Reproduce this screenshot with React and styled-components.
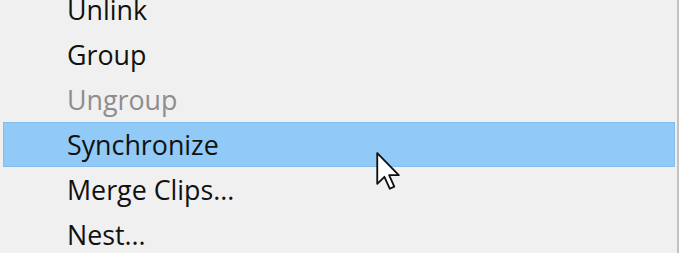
import React from "react";
import styled, { createGlobalStyle } from "styled-components";

const Global = createGlobalStyle`
  html, body {
    margin: 0;
    padding: 0;
    background: #f0f0f0;
    overflow: hidden;
  }
`;

const Page = styled.div`
  width: 680px;
  height: 253px;
  overflow: hidden;
  display: flex;
  background: #fff;
`;

const Menu = styled.ul`
  position: relative;
  list-style: none;
  margin: -13px 0 0 0;
  padding: 0 0 0 3px;
  width: 674px;
  background: #f0f0f0;
  border-right: 2px solid #c2c2c2;
  font-family: "Open Sans", "Noto Sans", sans-serif;
  font-size: 26.8px;
`;

const Item = styled.li`
  box-sizing: border-box;
  height: 45px;
  display: flex;
  align-items: center;
  padding-left: 63px;
  color: ${(p) => (p.disabled ? "#8d8d8d" : "#111")};
  background: ${(p) => (p.active ? "#91c9f7" : "transparent")};
  border: 1px solid ${(p) => (p.active ? "#84bcec" : "transparent")};
  margin-right: 2px;
`;

const Cursor = styled.svg`
  position: absolute;
  left: 374px;
  top: 164px;
`;

const items = [
  { label: "Unlink" },
  { label: "Group" },
  { label: "Ungroup", disabled: true },
  { label: "Synchronize", active: true },
  { label: "Merge Clips..." },
  { label: "Nest..." },
];

export default function App() {
  return (
    <>
      <Global />
      <Page>
        <Menu>
          {items.map((it) => (
            <Item key={it.label} disabled={it.disabled} active={it.active}>
              {it.label}
            </Item>
          ))}
          <Cursor width="27" height="41" viewBox="0 0 13 20">
            <path
              d="M1.5 1 L1.5 16 L5 12.6 L7.6 18.4 L9.8 17.4 L7.3 11.8 L12 11.8 Z"
              fill="#fff"
              stroke="#111"
              strokeWidth="0.9"
              strokeLinejoin="round"
            />
          </Cursor>
        </Menu>
      </Page>
    </>
  );
}
